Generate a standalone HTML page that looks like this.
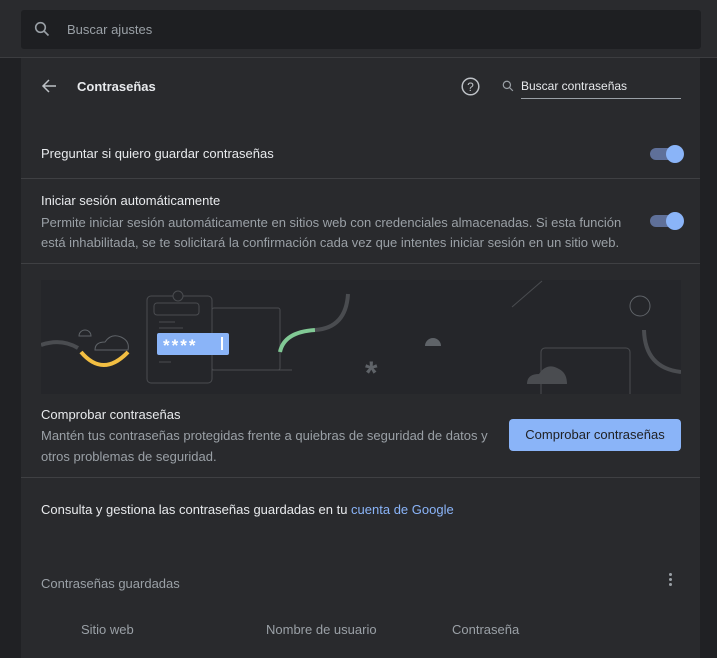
<!DOCTYPE html><html><head><meta charset="utf-8"><style>
body{margin:0;width:717px;height:654px;background:#202124;font-family:"Liberation Sans",sans-serif;overflow:hidden;position:relative;color:#e8eaed}
.top{position:absolute;left:0;top:0;width:717px;height:57px;background:#2a2b2e;border-bottom:1px solid #3c3d40}
.sb{position:absolute;left:21px;top:10px;width:680px;height:39px;background:#1e1f22;border-radius:3px}
.card{position:absolute;left:21px;top:58px;width:679px;height:600px;background:#292a2d}
.t{position:absolute;font-size:13px;white-space:nowrap}
.g{color:#9aa0a6}
.hr{position:absolute;left:0;width:679px;height:1px;background:#3f4043}
.tog{position:absolute;width:30px;height:12px;border-radius:6px;background:#5f7099}
.tog i{position:absolute;right:-4px;top:-3px;width:18px;height:18px;border-radius:50%;background:#8ab4f8}
</style></head><body>
<div class="top"></div>
<div class="sb">
<svg style="position:absolute;left:13px;top:11px" width="16" height="16" viewBox="0 0 16 16"><circle cx="6.5" cy="6.5" r="4.8" stroke="#9aa0a6" stroke-width="1.6" fill="none"/><path d="M10 10l4.5 4.5" stroke="#9aa0a6" stroke-width="1.6"/></svg>
<div class="t g" style="left:46px;top:12px">Buscar ajustes</div></div>
<div class="card">
<svg style="position:absolute;left:20px;top:20px" width="16" height="16" viewBox="0 0 16 16"><path d="M15 8H2M8 2L2 8l6 6" stroke="#bdc1c6" stroke-width="1.5" fill="none"/></svg>
<div class="t" style="left:56px;top:21px;font-weight:bold">Contraseñas</div>
<svg style="position:absolute;left:440px;top:19px" width="19" height="19" viewBox="0 0 19 19"><circle cx="9.5" cy="9.5" r="8.3" stroke="#bdc1c6" stroke-width="1.5" fill="none"/><text x="9.5" y="14" text-anchor="middle" font-size="12" fill="#bdc1c6" font-family="Liberation Sans">?</text></svg>
<svg style="position:absolute;left:481px;top:22px" width="12" height="12" viewBox="0 0 16 16"><circle cx="6.5" cy="6.5" r="4.8" stroke="#9aa0a6" stroke-width="1.6" fill="none"/><path d="M10 10l4.5 4.5" stroke="#9aa0a6" stroke-width="1.6"/></svg>
<div class="t" style="left:500px;top:21px;font-size:12px">Buscar contraseñas</div>
<div style="position:absolute;left:500px;top:40px;width:160px;height:1px;background:#9aa0a6"></div>
<div class="t" style="left:20px;top:88px">Preguntar si quiero guardar contraseñas</div>
<div class="tog" style="left:629px;top:90px"><i></i></div>
<div class="hr" style="top:120px"></div>
<div class="t" style="left:20px;top:135px">Iniciar sesión automáticamente</div>
<div class="t g" style="left:20px;top:155px;line-height:20px">Permite iniciar sesión automáticamente en sitios web con credenciales almacenadas. Si esta función<br>está inhabilitada, se te solicitará la confirmación cada vez que intentes iniciar sesión en un sitio web.</div>
<div class="tog" style="left:629px;top:157px"><i></i></div>
<div class="hr" style="top:205px"></div>
<svg style="position:absolute;left:20px;top:222px" width="640" height="114" viewBox="0 0 640 114">
<rect width="640" height="114" fill="#25262a"/>
<path d="M0 65 Q20 58 37 68" stroke="#4a4c50" stroke-width="4" fill="none"/>
<path d="M40 72 Q62 98 87 72" stroke="#f2be42" stroke-width="4" fill="none"/>
<path d="M38 56 a6 6 0 0 1 12 0z" stroke="#5f6368" fill="none"/>
<path d="M54 70 q0-8 10-8 q6-9 16-5 q9 4 7 13z" stroke="#5f6368" fill="none"/>
<rect x="106" y="16" width="65" height="87" rx="4" stroke="#4a4c50" fill="none"/>
<rect x="113" y="23" width="45" height="12" rx="3" stroke="#4a4c50" fill="none"/>
<circle cx="137" cy="16" r="5" stroke="#4a4c50" fill="#25262a"/>
<path d="M118 42h16M118 48h24M118 82h12" stroke="#4a4c50"/>
<rect x="171" y="28" width="68" height="62" rx="2" stroke="#4a4c50" fill="none"/>
<path d="M171 90h80" stroke="#4a4c50"/>
<rect x="116" y="53" width="72" height="22" rx="2" fill="#8ab4f8"/>
<text x="122" y="71" font-size="17" fill="#fff" font-weight="bold" letter-spacing="2" font-family="Liberation Sans">****</text>
<rect x="180" y="57" width="2" height="13" fill="#fff"/>
<path d="M239 72 Q243 52 274 50" stroke="#81c995" stroke-width="4" fill="none"/>
<path d="M274 50 Q305 48 307 14" stroke="#4a4c50" stroke-width="4" fill="none"/>
<text x="324" y="104" font-size="32" fill="#5f6368" font-weight="bold" font-family="Liberation Sans">*</text>
<path d="M384 66 a8 8 0 0 1 16 0z" fill="#5f6368"/>
<path d="M471 27 L501 1" stroke="#4a4c50"/>
<circle cx="599" cy="26" r="10" stroke="#5f6368" fill="none"/>
<path d="M603 50 Q604 88 640 92" stroke="#4a4c50" stroke-width="4" fill="none"/>
<rect x="500" y="68" width="89" height="50" rx="4" stroke="#4a4c50" fill="none"/>
<path d="M486 104 q0-10 12-10 q8-12 20-5 q8 4 8 15z" fill="#4a4c50"/>
</svg>
<div class="t" style="left:20px;top:349px">Comprobar contraseñas</div>
<div class="t g" style="left:20px;top:367px;line-height:21px">Mantén tus contraseñas protegidas frente a quiebras de seguridad de datos y<br>otros problemas de seguridad.</div>
<div style="position:absolute;left:488px;top:361px;width:172px;height:32px;background:#8ab4f8;border-radius:4px;color:#202124;font-size:13px;text-align:center;line-height:32px">Comprobar contraseñas</div>
<div class="hr" style="top:419px"></div>
<div class="t" style="left:20px;top:444px">Consulta y gestiona las contraseñas guardadas en tu <span style="color:#8ab4f8">cuenta de Google</span></div>
<div class="t g" style="left:20px;top:518px">Contraseñas guardadas</div>
<div style="position:absolute;left:648px;top:515px;width:3px">
<div style="width:3px;height:3px;background:#9aa0a6;border-radius:50%;margin-bottom:2px"></div><div style="width:3px;height:3px;background:#9aa0a6;border-radius:50%;margin-bottom:2px"></div><div style="width:3px;height:3px;background:#9aa0a6;border-radius:50%"></div></div>
<div class="t g" style="left:60px;top:564px">Sitio web</div>
<div class="t g" style="left:245px;top:564px">Nombre de usuario</div>
<div class="t g" style="left:431px;top:564px">Contraseña</div>
</div>
</body></html>
